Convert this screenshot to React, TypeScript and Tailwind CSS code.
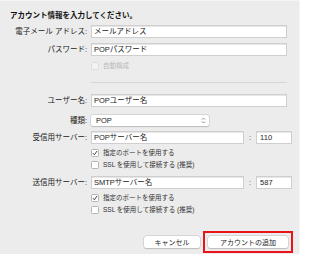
import React from "react";

const font = "font-['Helvetica','Liberation_Sans','Noto_Sans_CJK_JP',sans-serif]";

function Label({ children }: { children: React.ReactNode }) {
  return (
    <div className="w-[87px] shrink-0 text-right text-[7.5px] leading-none text-[#222]">{children}</div>
  );
}

function Input({ value, className = "" }: { value: string; className?: string }) {
  return (
    <div
      className={`h-[13px] bg-white border border-[#cfcfcf] shadow-[inset_0_1px_0_#e6e6e6] flex items-center pl-[2px] text-[7.5px] leading-none text-[#222] ${className}`}
    >
      {value}
    </div>
  );
}

function Check({ checked, disabled, label }: { checked?: boolean; disabled?: boolean; label: string }) {
  return (
    <div className="flex items-center h-[10px] pl-[91px]">
      <div
        className={`w-[8px] h-[8px] rounded-[1.5px] border ${disabled ? "border-[#dcdcdc] bg-[#f3f3f3]" : "border-[#b5b5b5] bg-white"} flex items-center justify-center`}
      >
        {checked && (
          <svg width="6" height="6" viewBox="0 0 6 6">
            <path d="M1 3.2 L2.4 4.8 L5 1" fill="none" stroke="#333" strokeWidth="0.9" />
          </svg>
        )}
      </div>
      <span className={`ml-[4px] text-[6.5px] leading-none ${disabled ? "text-[#b8b8b8]" : "text-[#333]"}`}>{label}</span>
    </div>
  );
}

export default function App() {
  return (
    <div className={`w-[300px] h-[254px] bg-[#ececec] border-t border-r border-[#f4f4f4] ${font} relative overflow-hidden`}>
      <div className="pl-[10px] pt-[10px] text-[7.5px] font-bold leading-[10px] text-[#111]">
        アカウント情報を入力してください。
      </div>
      {/* Row 1 */}
      <div className="flex items-center gap-[4px] mt-[4px]">
        <Label>電子メール アドレス:</Label>
        <Input value="メールアドレス" className="w-[196px]" />
      </div>
      <div className="flex items-center gap-[4px] mt-[5px]">
        <Label>パスワード:</Label>
        <Input value="POPパスワード" className="w-[196px]" />
      </div>
      <div className="mt-[5px]">
        <Check disabled label="自動構成" />
      </div>
      <div className="ml-[91px] mt-[11px] w-[196px] h-px bg-[#d6d6d6]" />
      <div className="flex items-center gap-[4px] mt-[11px]">
        <Label>ユーザー名:</Label>
        <Input value="POPユーザー名" className="w-[196px]" />
      </div>
      <div className="flex items-center gap-[4px] mt-[8px]">
        <Label>種類:</Label>
        <div className="w-[118px] h-[11px] bg-white rounded-[2px] shadow-[0_0_0_0.5px_#c4c4c4,0_0.5px_1px_#bbb] flex items-center justify-between pl-[5px] pr-[3px] text-[7.5px] leading-none text-[#222]">
          <span>POP</span>
          <svg width="5" height="7" viewBox="0 0 5 7">
            <path d="M1 2.6 L2.5 1 L4 2.6 M1 4.4 L2.5 6 L4 4.4" fill="none" stroke="#666" strokeWidth="0.7" />
          </svg>
        </div>
      </div>
      <div className="flex items-center gap-[4px] mt-[5px]">
        <Label>受信用サーバー:</Label>
        <Input value="POPサーバー名" className="w-[153px]" />
        <span className="text-[7.5px] leading-none text-[#444] mx-[1px]">:</span>
        <Input value="110" className="w-[36px] pl-[3px]" />
      </div>
      <div className="mt-[4px]">
        <Check checked label="指定のポートを使用する" />
      </div>
      <div className="mt-[2px]">
        <Check label="SSL を使用して接続する (推奨)" />
      </div>
      <div className="flex items-center gap-[4px] mt-[6px]">
        <Label>送信用サーバー:</Label>
        <Input value="SMTPサーバー名" className="w-[153px]" />
        <span className="text-[7.5px] leading-none text-[#444] mx-[1px]">:</span>
        <Input value="587" className="w-[36px] pl-[3px]" />
      </div>
      <div className="mt-[4px]">
        <Check checked label="指定のポートを使用する" />
      </div>
      <div className="mt-[2px]">
        <Check label="SSL を使用して接続する (推奨)" />
      </div>
      <div className="flex items-center mt-[16px] pl-[144px]">
        <div className="w-[56px] h-[12px] bg-white rounded-[2.5px] shadow-[0_0_0_0.5px_#c4c4c4,0_0.5px_1px_#bbb] flex items-center justify-center text-[7px] leading-none text-[#222]">
          キャンセル
        </div>
        <div className="ml-[3px] p-[3px] border-2 border-[#e8141a]">
          <div className="w-[80px] h-[12px] bg-white rounded-[2.5px] shadow-[0_0_0_0.5px_#c4c4c4,0_0.5px_1px_#bbb] flex items-center justify-center text-[7px] leading-none text-[#222]">
            アカウントの追加
          </div>
        </div>
      </div>
    </div>
  );
}
